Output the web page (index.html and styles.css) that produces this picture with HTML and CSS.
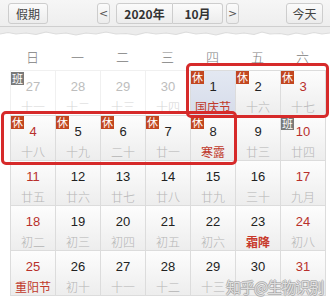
FILE: index.html
```html
<!DOCTYPE html>
<html lang="zh">
<head>
<meta charset="utf-8">
<link rel="stylesheet" href="styles.css">
</head>
<body>
<div class="page">
  <div class="toolbar">
    <div class="btn holiday">假期</div>
    <div class="nav">
      <div class="btn arrow">&lt;</div>
      <div class="btn sel year">2020年</div>
      <div class="btn sel month">10月</div>
      <div class="btn arrow">&gt;</div>
    </div>
    <div class="btn today">今天</div>
  </div>
  <svg class="torn" width="330" height="14" viewBox="0 0 330 14">
    <path d="M0 0 H330 V6 L322 7 L314 5.5 L305 7.5 L296 6 L288 8 L280 6.5 L270 7 L262 5 L254 7.5 L244 6 L236 7 L226 5.5 L216 8 L206 6 L196 7 L186 5 L176 7.5 L166 6 L156 7 L146 5.5 L136 8 L126 6.5 L116 7 L106 5 L96 7 L86 6 L76 8 L66 6 L56 7 L46 5 L36 7.5 L26 6 L16 7 L8 5.5 L0 7 Z" fill="#ececec"/>
    <path d="M0 7 L8 5.5 L16 7 L26 6 L36 7.5 L46 5 L56 7 L66 6 L76 8 L86 6 L96 7 L106 5 L116 7 L126 6.5 L136 8 L146 5.5 L156 7 L166 6 L176 7.5 L186 5 L196 7 L206 6 L216 8 L226 5.5 L236 7 L244 6 L254 7.5 L262 5 L270 7 L280 6.5 L288 8 L296 6 L305 7.5 L314 5.5 L322 7 L330 6" fill="none" stroke="#dcdcdc" stroke-width="1.2"/>
  </svg>
  <div class="weekdays">
    <div>日</div><div>一</div><div>二</div><div>三</div><div>四</div><div>五</div><div>六</div>
  </div>
  <div class="grid">
    <div class="cell other"><span class="badge work">班</span><div class="num">27</div><div class="lunar">十一</div></div>
    <div class="cell other"><div class="num">28</div><div class="lunar">十二</div></div>
    <div class="cell other"><div class="num">29</div><div class="lunar">十三</div></div>
    <div class="cell other"><div class="num">30</div><div class="lunar">十四</div></div>
    <div class="cell current"><span class="badge rest">休</span><div class="num">1</div><div class="lunar fest">国庆节</div></div>
    <div class="cell"><span class="badge rest">休</span><div class="num">2</div><div class="lunar">十六</div></div>
    <div class="cell"><span class="badge rest">休</span><div class="num red">3</div><div class="lunar">十七</div></div>

    <div class="cell"><span class="badge rest">休</span><div class="num red">4</div><div class="lunar">十八</div></div>
    <div class="cell"><span class="badge rest">休</span><div class="num">5</div><div class="lunar">十九</div></div>
    <div class="cell"><span class="badge rest">休</span><div class="num">6</div><div class="lunar">二十</div></div>
    <div class="cell"><span class="badge rest">休</span><div class="num">7</div><div class="lunar">廿一</div></div>
    <div class="cell"><span class="badge rest">休</span><div class="num">8</div><div class="lunar fest">寒露</div></div>
    <div class="cell"><div class="num">9</div><div class="lunar">廿三</div></div>
    <div class="cell"><span class="badge work">班</span><div class="num red">10</div><div class="lunar">廿四</div></div>

    <div class="cell"><div class="num red">11</div><div class="lunar">廿五</div></div>
    <div class="cell"><div class="num">12</div><div class="lunar">廿六</div></div>
    <div class="cell"><div class="num">13</div><div class="lunar">廿七</div></div>
    <div class="cell"><div class="num">14</div><div class="lunar">廿八</div></div>
    <div class="cell"><div class="num">15</div><div class="lunar">廿九</div></div>
    <div class="cell"><div class="num">16</div><div class="lunar">三十</div></div>
    <div class="cell"><div class="num red">17</div><div class="lunar">九月</div></div>

    <div class="cell"><div class="num red">18</div><div class="lunar">初二</div></div>
    <div class="cell"><div class="num">19</div><div class="lunar">初三</div></div>
    <div class="cell"><div class="num">20</div><div class="lunar">初四</div></div>
    <div class="cell"><div class="num">21</div><div class="lunar">初五</div></div>
    <div class="cell"><div class="num">22</div><div class="lunar">初六</div></div>
    <div class="cell"><div class="num">23</div><div class="lunar fest bold">霜降</div></div>
    <div class="cell"><div class="num red">24</div><div class="lunar">初八</div></div>

    <div class="cell"><div class="num red">25</div><div class="lunar fest">重阳节</div></div>
    <div class="cell"><div class="num">26</div><div class="lunar">初十</div></div>
    <div class="cell"><div class="num">27</div><div class="lunar">十一</div></div>
    <div class="cell"><div class="num">28</div><div class="lunar">十二</div></div>
    <div class="cell"><div class="num">29</div><div class="lunar">十三</div></div>
    <div class="cell"><div class="num">30</div><div class="lunar"></div></div>
    <div class="cell"><div class="num red">31</div><div class="lunar"></div></div>
  </div>
  <div class="mark mark1"></div>
  <div class="mark mark2"></div>
  <div class="watermark">知乎@生物识别</div>
</div>
</body>
</html>
```

FILE: styles.css
```css
html, body {
  margin: 0;
  padding: 0;
  background: #fff;
}
.page {
  position: relative;
  width: 330px;
  height: 306px;
  overflow: hidden;
  font-family: "Liberation Sans", "Noto Sans CJK SC", sans-serif;
}
.toolbar {
  display: flex;
  align-items: center;
  height: 26px;
  padding: 0 7px 0 8px;
  background: linear-gradient(#f6f6f6, #eeeeee);
  border-bottom: 1px solid #cfcfcf;
  box-sizing: content-box;
}
.btn {
  height: 21px;
  box-sizing: border-box;
  border: 1px solid #cdcdcd;
  border-radius: 3px;
  background: linear-gradient(#fbfbfb, #ececec);
  display: flex;
  align-items: center;
  justify-content: center;
  font-family: "Noto Sans CJK SC", sans-serif;
  font-size: 12px;
  color: #444;
}
.holiday {
  width: 40px;
}
.nav {
  display: flex;
  align-items: center;
  margin-left: 49px;
}
.arrow {
  width: 13px;
  font-family: "DejaVu Sans", sans-serif;
  font-size: 11px;
  color: #555;
}
.sel {
  font-weight: bold;
  color: #333;
  border-radius: 0;
}
.year {
  width: 57px;
  margin-left: 6px;
  border-radius: 3px 0 0 3px;
}
.month {
  width: 50px;
  border-left: none;
  border-radius: 0 3px 3px 0;
  margin-right: 3px;
}
.today {
  width: 37px;
  margin-left: auto;
}
.torn {
  display: block;
}
.weekdays {
  display: grid;
  grid-template-columns: repeat(7, 45px);
  margin: 4px 0 0 10px;
  height: 25px;
  font-family: "Noto Sans CJK SC", sans-serif;
  font-size: 13px;
  color: #808080;
}
.weekdays div {
  text-align: center;
  line-height: 24px;
  font-weight: 300;
}
.grid {
  display: grid;
  grid-template-columns: repeat(7, 45px);
  grid-auto-rows: 45px;
  margin-left: 10px;
  width: 316px;
  box-sizing: border-box;
  border-right: 1px solid #dcdcdc;
  border-bottom: 1px solid #dcdcdc;
}
.cell {
  position: relative;
  box-sizing: border-box;
  border-left: 1px solid #dcdcdc;
  border-top: 1px solid #dcdcdc;
  background: linear-gradient(#fdfdfd, #ededed);
  padding-top: 8px;
  text-align: center;
}
.cell.other {
  background: #fff;
  border-color: #f0f0f0;
}
.cell.current {
  background: linear-gradient(#e3e8f2, #d6dcea);
}
.num {
  font-size: 13px;
  line-height: 16px;
  color: #222;
}
.num.red {
  color: #b8302c;
}
.other .num {
  color: #bdbdbd;
}
.lunar {
  margin-top: 4px;
  font-family: "Noto Sans CJK SC", sans-serif;
  font-size: 12px;
  line-height: 16px;
  height: 16px;
  color: #b5b5b5;
  font-weight: 300;
}
.other .lunar {
  color: #d5d5d5;
}
.lunar.fest {
  color: #c0392b;
  font-weight: 400;
}
.lunar.bold {
  font-weight: 700;
  color: #c8392b;
}
.badge {
  position: absolute;
  top: 0;
  left: 0;
  width: 13px;
  height: 13px;
  font-family: "Noto Sans CJK SC", sans-serif;
  font-size: 11px;
  line-height: 13px;
  color: #fff;
  text-align: center;
}
.badge.rest {
  background: #c2461f;
}
.badge.work {
  background: #7a7a7a;
  top: 1px;
}
.mark {
  position: absolute;
  box-sizing: border-box;
  border: 3px solid #d62a2a;
  border-radius: 5px;
}
.mark1 {
  left: 186px;
  top: 63px;
  width: 143px;
  height: 55px;
}
.mark2 {
  left: 1px;
  top: 111px;
  width: 236px;
  height: 54px;
}
.watermark {
  position: absolute;
  left: 226px;
  top: 277px;
  font-family: "Noto Sans CJK SC", sans-serif;
  font-size: 15px;
  line-height: 20px;
  letter-spacing: -1px;
  color: rgba(235, 235, 235, 0.85);
  text-shadow: 1px 0 0 rgba(140,140,140,0.55), -1px 0 0 rgba(140,140,140,0.55), 0 1px 0 rgba(140,140,140,0.55), 0 -1px 0 rgba(140,140,140,0.55);
}
```
